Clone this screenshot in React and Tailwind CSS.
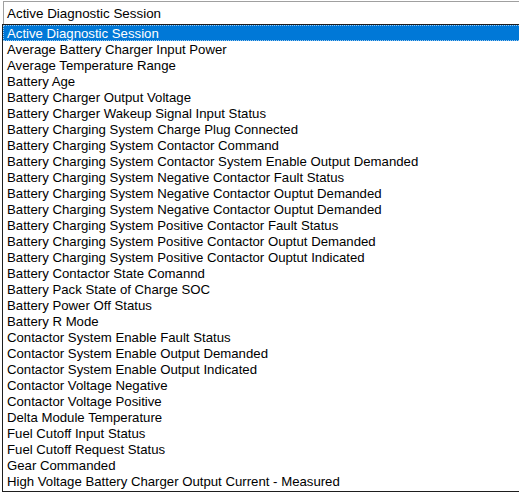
import React from "react";

const items = [
  "Active Diagnostic Session",
  "Average Battery Charger Input Power",
  "Average Temperature Range",
  "Battery Age",
  "Battery Charger Output Voltage",
  "Battery Charger Wakeup Signal Input Status",
  "Battery Charging System Charge Plug Connected",
  "Battery Charging System Contactor Command",
  "Battery Charging System Contactor System Enable Output Demanded",
  "Battery Charging System Negative Contactor Fault Status",
  "Battery Charging System Negative Contactor Ouptut Demanded",
  "Battery Charging System Negative Contactor Ouptut Demanded",
  "Battery Charging System Positive Contactor Fault Status",
  "Battery Charging System Positive Contactor Ouptut Demanded",
  "Battery Charging System Positive Contactor Ouptut Indicated",
  "Battery Contactor State Comannd",
  "Battery Pack State of Charge SOC",
  "Battery Power Off Status",
  "Battery R Mode",
  "Contactor System Enable Fault Status",
  "Contactor System Enable Output Demanded",
  "Contactor System Enable Output Indicated",
  "Contactor Voltage Negative",
  "Contactor Voltage Positive",
  "Delta Module Temperature",
  "Fuel Cutoff Input Status",
  "Fuel Cutoff Request Status",
  "Gear Commanded",
  "High Voltage Battery Charger Output Current - Measured",
];

export default function App() {
  return (
    <div
      className="w-[519px] h-[492px] bg-white overflow-hidden text-[13.2px] text-black"
      style={{ fontFamily: '"Liberation Sans", Arial, sans-serif' }}
    >
      <div className="h-[23px] ml-[3px] mt-[1px] border-t border-l border-[#a0a0a0] flex items-center pl-[3px] pt-[1px] leading-none text-[13.4px]">
        Active Diagnostic Session
      </div>
      <div className="ml-[2px] w-[530px] h-[468px] border border-[#1e1e1e] bg-white">
        {items.map((t, i) => (
          <div
            key={i}
            className={
              i === 0
                ? "h-[16px] flex items-center pl-[3px] pt-[1px] bg-[#0078d7] text-white border border-dotted border-[#9cc8ee] leading-none whitespace-nowrap"
                : "h-[16px] flex items-center pl-[4px] pt-[2px] leading-none whitespace-nowrap"
            }
          >
            {t}
          </div>
        ))}
      </div>
    </div>
  );
}
